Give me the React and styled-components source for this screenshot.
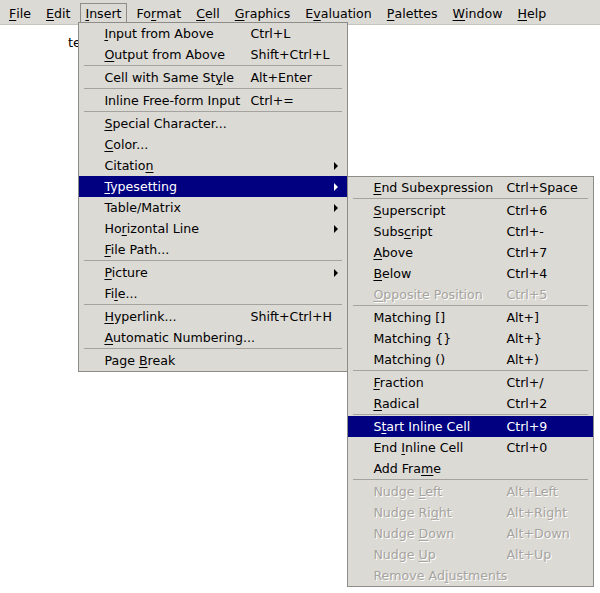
import React from 'react';
import styled, { createGlobalStyle } from 'styled-components';

const GlobalStyle = createGlobalStyle`
  html, body {
    margin: 0;
    padding: 0;
    background: #fff;
  }
  body {
    font-family: "DejaVu Sans", "Liberation Sans", sans-serif;
    font-size: 12.6px;
    color: #000;
  }
`;

const Screen = styled.div`
  position: relative;
  width: 600px;
  height: 593px;
  overflow: hidden;
  background: #fff;
`;

const MenuBar = styled.div`
  display: flex;
  gap: 5px;
  height: 25px;
  box-sizing: border-box;
  padding: 3px 0 0 4px;
  background: #dcdad5;
  border-bottom: 1px solid #c6c4bf;
`;

const BarItem = styled.div`
  position: relative;
  display: flex;
  align-items: center;
  height: 20px;
  box-sizing: border-box;
  padding: 0 4px;
  border: 1px solid ${p => (p.$open ? '#8e8c88' : 'transparent')};
  white-space: nowrap;
`;

const Content = styled.div`
  padding: 10px 0 0 68px;
  line-height: 16px;
  font-size: 13px;
`;

const Menu = styled.div`
  position: absolute;
  top: ${p => p.$top};
  left: ${p => p.$left};
  z-index: 2;
  width: ${p => p.$width}px;
  box-sizing: border-box;
  background: #dcdad5;
  border: 1px solid #8e8c88;
  color: #000;
`;

const Row = styled.div`
  position: relative;
  display: flex;
  align-items: center;
  height: 21px;
  padding-left: 25px;
  white-space: nowrap;
  background: ${p => (p.$active ? '#000080' : 'transparent')};
  color: ${p => (p.$active ? '#fff' : p.$disabled ? '#a6a49f' : '#000')};
  text-shadow: ${p => (p.$disabled ? '1px 1px 0 #ffffff' : 'none')};
`;

const Label = styled.span`
  flex-shrink: 0;
  width: ${p => p.$w}px;
`;

const Shortcut = styled.span`
  flex-shrink: 0;
`;

const Arrow = styled.span`
  margin-left: auto;
  margin-right: 9px;
  width: 0;
  height: 0;
  border-left: 4px solid currentColor;
  border-top: 4px solid transparent;
  border-bottom: 4px solid transparent;
`;

const Separator = styled.div`
  height: 2px;
  margin: 0 5px;
  box-sizing: border-box;
  border-top: 1px solid #a5a39f;
`;

const Key = styled.span`
  text-decoration: underline;
  text-underline-offset: 2px;
`;

// "&" marks the mnemonic letter, as in Qt
const Mnemonic = ({ text }) => {
  const i = text.indexOf('&');
  if (i < 0) return text;
  return (
    <>
      {text.slice(0, i)}
      <Key>{text[i + 1]}</Key>
      {text.slice(i + 2)}
    </>
  );
};

const barItems = ['&File', '&Edit', '&Insert', 'Fo&rmat', '&Cell', '&Graphics', 'E&valuation', '&Palettes', '&Window', '&Help'];

const typesetting = [
  { label: '&End Subexpression', key: 'Ctrl+Space' },
  'sep',
  { label: '&Superscript', key: 'Ctrl+6' },
  { label: 'Subs&cript', key: 'Ctrl+-' },
  { label: '&Above', key: 'Ctrl+7' },
  { label: '&Below', key: 'Ctrl+4' },
  { label: '&Opposite Position', key: 'Ctrl+5', disabled: true },
  'sep',
  { label: 'Matching []', key: 'Alt+]' },
  { label: 'Matching {}', key: 'Alt+}' },
  { label: 'Matching ()', key: 'Alt+)' },
  'sep',
  { label: '&Fraction', key: 'Ctrl+/' },
  { label: '&Radical', key: 'Ctrl+2' },
  'sep',
  { label: 'S&tart Inline Cell', key: 'Ctrl+9', active: true },
  { label: 'End &Inline Cell', key: 'Ctrl+0' },
  { label: 'Add Fra&me' },
  'sep',
  { label: 'Nudge &Left', key: 'Alt+Left', disabled: true },
  { label: 'Nudge Ri&ght', key: 'Alt+Right', disabled: true },
  { label: 'Nudge &Down', key: 'Alt+Down', disabled: true },
  { label: 'Nudge &Up', key: 'Alt+Up', disabled: true },
  { label: 'Remove Ad&justments', disabled: true },
];

const insert = [
  { label: '&Input from Above', key: 'Ctrl+L' },
  { label: '&Output from Above', key: 'Shift+Ctrl+L' },
  'sep',
  { label: 'Cell with Same St&yle', key: 'Alt+Enter' },
  'sep',
  { label: 'Inline Free-form Input', key: 'Ctrl+=' },
  'sep',
  { label: '&Special Character...' },
  { label: '&Color...' },
  { label: 'Citatio&n', sub: true },
  { label: '&Typesetting', sub: true, active: true, items: typesetting },
  { label: 'Table/Matrix', sub: true },
  { label: 'Ho&rizontal Line', sub: true },
  { label: '&File Path...' },
  'sep',
  { label: '&Picture', sub: true },
  { label: 'Fi&le...' },
  'sep',
  { label: '&Hyperlink...', key: 'Shift+Ctrl+H' },
  { label: '&Automatic Numbering...' },
  'sep',
  { label: 'Page &Break' },
];

const MenuList = ({ items, width, labelWidth, top, left }) => (
  <Menu $width={width} $top={top} $left={left}>
    {items.map((it, i) =>
      it === 'sep' ? (
        <Separator key={i} />
      ) : (
        <Row key={i} $active={it.active} $disabled={it.disabled}>
          <Label $w={labelWidth}>
            <Mnemonic text={it.label} />
          </Label>
          {it.key && <Shortcut>{it.key}</Shortcut>}
          {it.sub && <Arrow />}
          {it.items && <MenuList items={it.items} width={247} labelWidth={133} top="0" left="100%" />}
        </Row>
      )
    )}
  </Menu>
);

export default function App() {
  return (
    <Screen>
      <GlobalStyle />
      <MenuBar>
        {barItems.map(t => (
          <BarItem key={t} $open={t === '&Insert'}>
            <Mnemonic text={t} />
            {t === '&Insert' && <MenuList items={insert} width={270} labelWidth={146} top="100%" left="-3px" />}
          </BarItem>
        ))}
      </MenuBar>
      <Content>text</Content>
    </Screen>
  );
}
